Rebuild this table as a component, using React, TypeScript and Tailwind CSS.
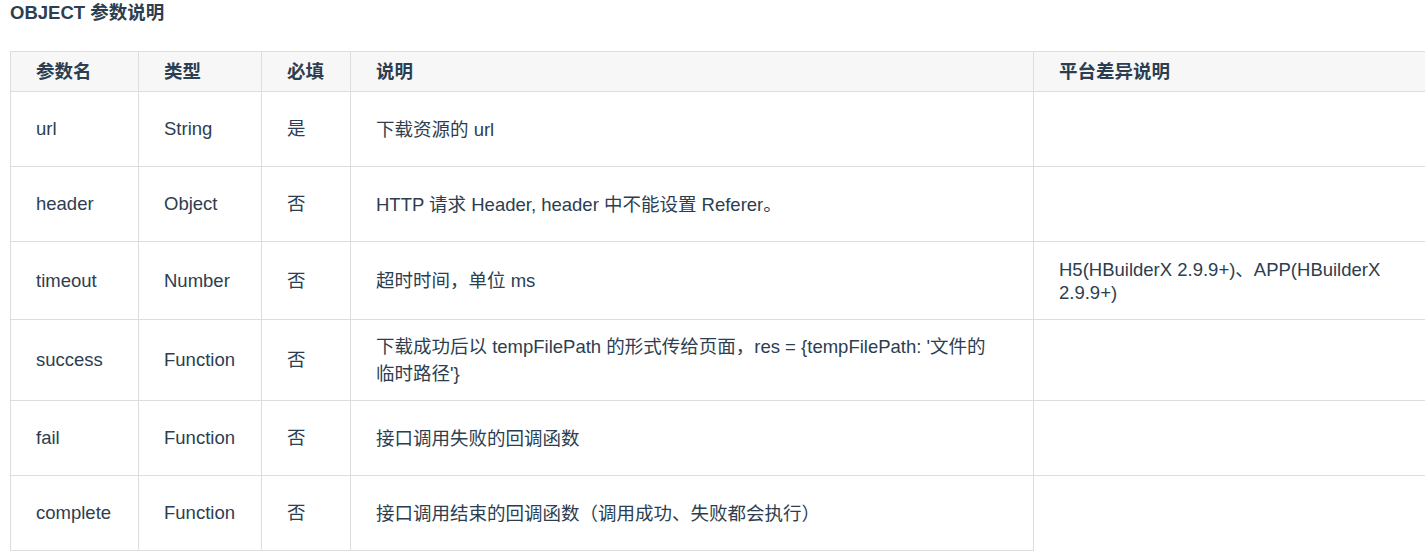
type Row = {
  name: string;
  type: string;
  required: string;
  desc: React.ReactNode;
  platform?: React.ReactNode;
  height: string;
};

const ROWS: Row[] = [
  { name: "url", type: "String", required: "是", desc: "下载资源的 url", height: "h-[75px]" },
  {
    name: "header",
    type: "Object",
    required: "否",
    desc: "HTTP 请求 Header, header 中不能设置 Referer。",
    height: "h-[75px]",
  },
  {
    name: "timeout",
    type: "Number",
    required: "否",
    desc: "超时时间，单位 ms",
    platform: (
      <>
        H5(HBuilderX 2.9.9+)、APP(HBuilderX
        <br />
        2.9.9+)
      </>
    ),
    height: "h-[78px]",
  },
  {
    name: "success",
    type: "Function",
    required: "否",
    desc: (
      <>
        下载成功后以 tempFilePath 的形式传给页面，res = {"{"}tempFilePath: '文件的
        <br />
        临时路径'{"}"}
      </>
    ),
    height: "h-[81px]",
  },
  { name: "fail", type: "Function", required: "否", desc: "接口调用失败的回调函数", height: "h-[75px]" },
  {
    name: "complete",
    type: "Function",
    required: "否",
    desc: "接口调用结束的回调函数（调用成功、失败都会执行）",
    height: "h-[75px]",
  },
];

const COLS = "grid grid-cols-[128px_123px_89px_683px_407px]";
const CELL = "flex items-center px-[25px] border-r border-b border-[#dddddd]";

export default function App() {
  return (
    <div
      className="w-full min-h-screen overflow-hidden bg-white text-[18.5px] text-[#2c3e50]"
      style={{ fontFamily: '"Liberation Sans", "Noto Sans CJK SC", Arial, sans-serif' }}
    >
      <h3 className="pl-[10px] leading-[26px] font-bold mb-[25px]">OBJECT 参数说明</h3>

      <div className="ml-[10px] w-[1431px] border-l border-t border-[#dddddd]">
        {/* header */}
        <div className={`${COLS} h-[40px] bg-[#f7f7f7] font-bold`}>
          <div className={CELL}>参数名</div>
          <div className={CELL}>类型</div>
          <div className={CELL}>必填</div>
          <div className={CELL}>说明</div>
          <div className={CELL}>平台差异说明</div>
        </div>

        {ROWS.map((r, i) => {
          const last = i === ROWS.length - 1;
          return (
            <div key={r.name} className={`${COLS} ${r.height}`}>
              <div className={CELL}>{r.name}</div>
              <div className={CELL}>{r.type}</div>
              <div className={CELL}>{r.required}</div>
              <div className={`${CELL} leading-[27px]`}>
                <span>{r.desc}</span>
              </div>
              <div
                className={`flex items-center px-[25px] border-r border-[#dddddd] leading-[23px] ${
                  last ? "" : "border-b"
                }`}
              >
                <span>{r.platform}</span>
              </div>
            </div>
          );
        })}
      </div>
    </div>
  );
}
